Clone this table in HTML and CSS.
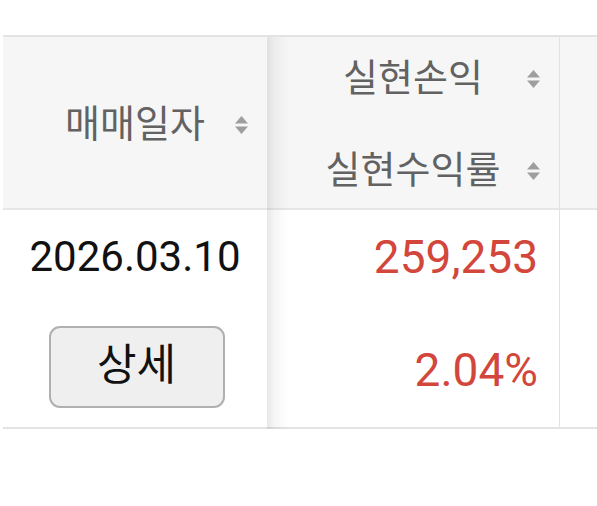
FILE: index.html
```html
<!DOCTYPE html>
<html lang="ko">
<head>
<meta charset="utf-8">
<link rel="stylesheet" href="styles.css">
</head>
<body>
<div class="wrap">
  <div class="table">
    <div class="th col1">
      <div class="hline"><span>매매일자</span><span class="sort"><svg viewBox="0 0 13 18" width="13" height="18"><path d="M6.5 0 L13 7.5 L0 7.5 Z" fill="#9e9e9e"/><path d="M0 10.5 L13 10.5 L6.5 18 Z" fill="#9e9e9e"/></svg></span></div>
    </div>
    <div class="th col2">
      <div class="hline"><span>실현손익</span><span class="sort"><svg viewBox="0 0 13 18" width="13" height="18"><path d="M6.5 0 L13 7.5 L0 7.5 Z" fill="#9e9e9e"/><path d="M0 10.5 L13 10.5 L6.5 18 Z" fill="#9e9e9e"/></svg></span></div>
      <div class="hline"><span>실현수익률</span><span class="sort"><svg viewBox="0 0 13 18" width="13" height="18"><path d="M6.5 0 L13 7.5 L0 7.5 Z" fill="#9e9e9e"/><path d="M0 10.5 L13 10.5 L6.5 18 Z" fill="#9e9e9e"/></svg></span></div>
    </div>
    <div class="th col3"></div>

    <div class="td col1">
      <div class="date">2026.03.10</div>
      <button class="detail">상세</button>
    </div>
    <div class="td col2">
      <div class="num">259,253</div>
      <div class="num">2.04%</div>
    </div>
    <div class="td col3"></div>
  </div>
</div>
</body>
</html>
```

FILE: styles.css
```css
html, body {
  margin: 0;
  padding: 0;
  background: #ffffff;
}
body {
  font-family: Roboto, "Noto Sans CJK KR", sans-serif;
}
.wrap {
  padding: 35px 0 0 3px;
}
.table {
  display: grid;
  grid-template-columns: 264px 293px 1fr;
  border-top: 2px solid #e3e3e3;
  border-bottom: 2px solid #e3e3e3;
}
.th {
  background: #f6f6f6;
  height: 168px;
  padding-top: 3px;
  box-sizing: content-box;
  border-bottom: 2px solid #e6e6e6;
  position: relative;
  display: flex;
  flex-direction: column;
  justify-content: center;
  gap: 46px;
}
.td {
  background: #ffffff;
  height: 217px;
  position: relative;
  display: flex;
  flex-direction: column;
}
.col2 {
  border-right: 1px solid #e2e2e2;
}
.col2::before {
  content: "";
  position: absolute;
  left: 0;
  top: 0;
  bottom: -3px;
  width: 22px;
  background: linear-gradient(to right, rgba(0,0,0,0.09), rgba(0,0,0,0.035) 35%, rgba(0,0,0,0));
  pointer-events: none;
}
.hline {
  position: relative;
  height: 46px;
  line-height: 46px;
  font-size: 38px;
  color: #626262;
  text-align: center;
}
.sort {
  position: absolute;
  right: 19px;
  top: 15px;
  width: 13px;
  height: 18px;
  line-height: 0;
}
.sort svg {
  display: block;
}
.td.col1 {
  align-items: center;
  padding-top: 22px;
  gap: 44px;
  box-sizing: border-box;
}
.date {
  font-size: 42px;
  line-height: 50px;
  color: #111111;
}
.detail {
  width: 176px;
  height: 82px;
  margin-left: 3px;
  border: 2px solid #b0b0b0;
  border-radius: 11px;
  background: #efefef;
  font-family: Roboto, "Noto Sans CJK KR", sans-serif;
  font-size: 43px;
  color: #111111;
  padding: 0 0 4px 0;
  line-height: 1;
}
.td.col2 {
  align-items: flex-end;
  padding: 22px 21px 0 0;
  gap: 63px;
  box-sizing: border-box;
}
.num {
  font-size: 46px;
  line-height: 50px;
  color: #d2463b;
}
```
